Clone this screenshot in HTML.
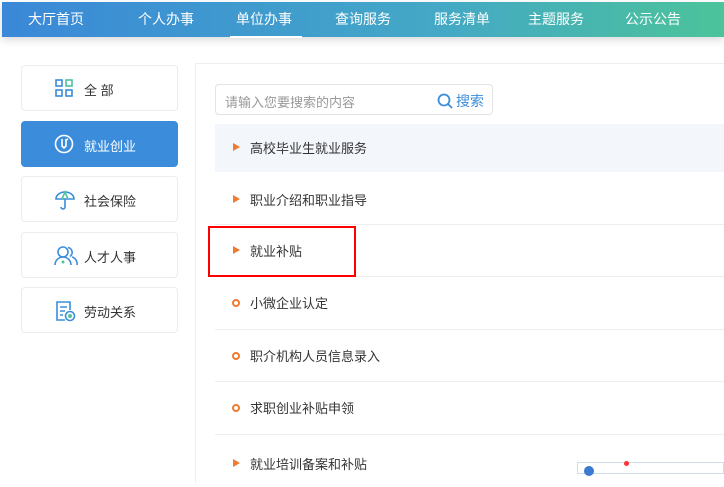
<!DOCTYPE html>
<html><head><meta charset="utf-8"><style>
*{margin:0;padding:0;box-sizing:border-box}
body{width:724px;height:472px;overflow:hidden;background:#fff;font-family:"Liberation Sans","Noto Sans CJK SC",sans-serif;position:relative}
.nav{position:absolute;left:2px;top:2px;width:722px;height:35px;background:linear-gradient(90deg,#3a88d8,#44a8c6 60%,#4cc39a);box-shadow:0 3px 8px rgba(0,0,0,.15)}
.nav span{position:absolute;top:7px;color:#fff;font-size:14px;transform:translateX(-50%);white-space:nowrap}
.ul{position:absolute;left:228px;top:34px;width:72px;height:2px;background:#fff}
.side{position:absolute;left:21px;width:157px;height:46px;border:1px solid #ececec;border-radius:4px;background:#fff;font-size:13px;color:#333}
.side.act{background:#3b8ddb;border-color:#3b8ddb;color:#fff}
.side svg{position:absolute;left:32px;top:12px}
.side span{position:absolute;left:62px;top:14px}
.main{position:absolute;left:195px;top:63px;width:540px;height:420px;border-left:1px solid #eee;border-top:1px solid #eee}
.search{position:absolute;left:215px;top:84px;width:278px;height:31px;border:1px solid #e3e3e3;border-radius:4px;font-size:13px;color:#999}
.row{position:absolute;left:215px;width:509px;height:52px;border-bottom:1px solid #eceef1;font-size:13px;color:#333}
.row span{position:absolute;left:35px;top:16px}
.tri{position:absolute;left:18px;top:21px;width:0;height:0;border-left:7px solid #f07a30;border-top:4.5px solid transparent;border-bottom:4.5px solid transparent}
.dot{position:absolute;left:17px;top:22px;width:8px;height:8px;border:2px solid #f07a30;border-radius:50%}
</style></head><body>
<div class="nav">
<span style="left:54px">大厅首页</span><span style="left:164px">个人办事</span><span style="left:262px">单位办事</span><span style="left:361px">查询服务</span><span style="left:460px">服务清单</span><span style="left:554px">主题服务</span><span style="left:651px">公示公告</span>
<div class="ul"></div></div>
<div class="side" style="top:65px"><svg width="20" height="20" viewBox="0 0 20 20" fill="none" stroke="#3b8ddb" stroke-width="1.6"><rect x="2" y="2" width="6" height="6"/><rect x="12" y="2" width="6" height="6" stroke="#4cc39a"/><rect x="2" y="12" width="6" height="6"/><rect x="12" y="12" width="6" height="6"/></svg><span>全 部</span></div>
<div class="side act" style="top:121px"><svg width="20" height="20" viewBox="0 0 20 20" fill="none" stroke="#fff" stroke-width="1.6"><circle cx="10" cy="10" r="8.5"/><path d="M8 5v7l2 2 2-2V5M12 6l2-1"/></svg><span>就业创业</span></div>
<div class="side" style="top:176px"><svg width="22" height="22" viewBox="0 0 22 22" fill="none" stroke="#3b8ddb" stroke-width="1.6"><path d="M2 10a9 7 0 0 1 18 0zM11 10v8a2 2 0 0 1-4 0"/><path d="M8 10l3-7 3 7" stroke="#4cc39a"/></svg><span>社会保险</span></div>
<div class="side" style="top:232px"><svg width="24" height="22" viewBox="0 0 24 22" fill="none" stroke="#3b8ddb" stroke-width="1.6"><circle cx="9" cy="7" r="5"/><path d="M1 20a8 8 0 0 1 16 0"/><path d="M14 2.5a5 5 0 0 1 2 9M18 12a7 7 0 0 1 5 8"/><circle cx="9" cy="17" r="1.5" fill="#4cc39a" stroke="none"/></svg><span>人才人事</span></div>
<div class="side" style="top:287px"><svg width="22" height="22" viewBox="0 0 22 22" fill="none" stroke="#3b8ddb" stroke-width="1.6"><path d="M11 20H3V2h13v8"/><path d="M6 7h7M6 11h5M6 15h3"/><circle cx="16" cy="16" r="4.5"/><circle cx="16" cy="16" r="2" fill="#4cc39a" stroke="none"/></svg><span>劳动关系</span></div>
<div class="main"></div>
<div class="search"><span style="position:absolute;left:9px;top:7px">请输入您要搜索的内容</span>
<svg style="position:absolute;left:221px;top:8px" width="16" height="16" viewBox="0 0 16 16" fill="none" stroke="#3b8ddb" stroke-width="1.8"><circle cx="7" cy="7" r="5.5"/><path d="M11 11l4 4"/></svg>
<span style="position:absolute;left:240px;top:6px;color:#3b8ddb;font-size:14px">搜索</span></div>
<div class="row" style="top:124px;background:#f3f6fb;border:none;height:48px"><i class="tri" style="top:19px"></i><span style="top:14px">高校毕业生就业服务</span></div>
<div class="row" style="top:172px;height:53px"><i class="tri" style="top:23px"></i><span style="top:18px">职业介绍和职业指导</span></div>
<div class="row" style="top:225px"><i class="tri"></i><span>就业补贴</span></div>
<div class="row" style="top:277px;height:53px"><i class="dot"></i><span>小微企业认定</span></div>
<div class="row" style="top:330px"><i class="dot"></i><span>职介机构人员信息录入</span></div>
<div class="row" style="top:382px;height:53px"><i class="dot"></i><span>求职创业补贴申领</span></div>
<div class="row" style="top:435px;border:none"><i class="tri" style="top:24px"></i><span style="top:19px">就业培训备案和补贴</span></div>
<div style="position:absolute;left:208px;top:226px;width:148px;height:51px;border:2px solid #f00"></div>
<div style="position:absolute;left:577px;top:462px;width:147px;height:12px;border:1px solid #cfdcee;background:#fff"><i style="position:absolute;left:6px;top:3px;width:10px;height:10px;border-radius:50%;background:#3a7ad0"></i><i style="position:absolute;left:46px;top:-2px;width:5px;height:5px;border-radius:50%;background:#f33"></i></div>
</body></html>
